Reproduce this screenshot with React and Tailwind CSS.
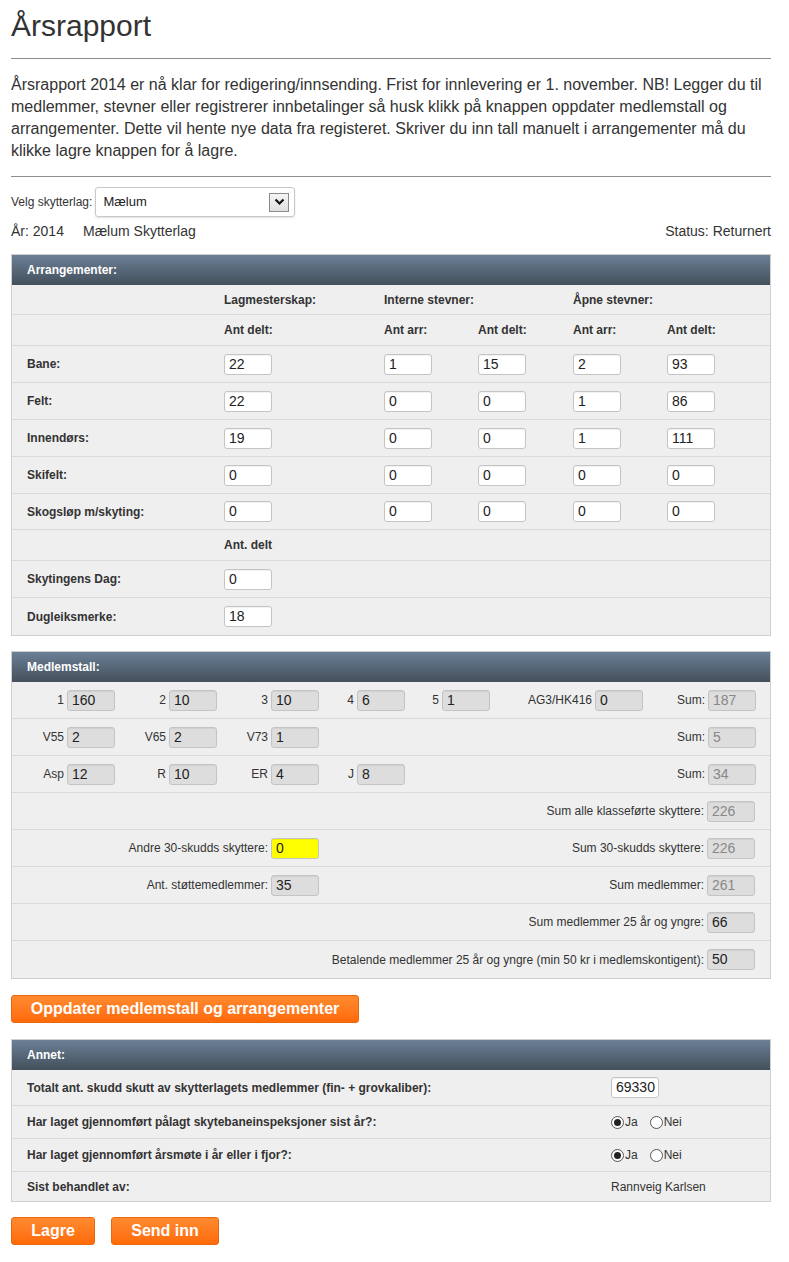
import React from "react";

const font = { fontFamily: '"Liberation Sans", Arial, sans-serif' };

function Box({ value, gray, yellow, dim, w = "w-[48px]" }) {
  const bg = yellow ? "bg-[#ffff00]" : gray ? "bg-[#dddddd]" : "bg-white";
  const color = dim ? "text-[#888]" : "text-[#222]";
  return (
    <div
      className={`${w} h-[21px] ${bg} ${color} rounded-[3px] border border-[#c4c4c4] pl-[4px] text-[14px] font-normal leading-[19px] shadow-[inset_0_1px_1px_rgba(0,0,0,0.06)]`}
    >
      {value}
    </div>
  );
}

function PanelHeader({ title }) {
  return (
    <div className="h-[30px] bg-gradient-to-b from-[#6b8096] to-[#44505c] pl-[15px] text-[12px] font-bold leading-[30px] text-white">
      {title}
    </div>
  );
}

const arrCols = "grid grid-cols-[212px_160px_94px_95px_94px_1fr] items-center";

function ArrRow({ label, values, tall = true, h, last }) {
  const height = h || (tall ? "h-[37px]" : "h-[31px]");
  return (
    <div
      className={`${arrCols} ${height} ${last ? "" : "border-b border-[#dadada]"} text-[12px] font-bold text-[#333]`}
    >
      <div className="pl-[15px]">{label}</div>
      {values.map((v, i) =>
        v === null ? (
          <div key={i} />
        ) : !tall ? (
          <div key={i}>{v}</div>
        ) : (
          <div key={i}>
            <Box value={v} />
          </div>
        )
      )}
    </div>
  );
}

const mWidths = ["w-[103px]", "w-[102px]", "w-[102px]", "w-[86px]", "w-[85px]", "w-[153px]", "w-[113px]"];

function MRow({ cells }) {
  return (
    <div className="flex h-[37px] items-center border-b border-[#dadada] text-[12px] text-[#333]">
      {cells.map((c, i) => (
        <div key={i} className={`${mWidths[i]} flex items-center justify-end gap-[3px]`}>
          {c && (
            <>
              <span>{c[0]}</span>
              <Box value={c[1]} gray dim={c[2]} />
            </>
          )}
        </div>
      ))}
    </div>
  );
}

function MRightRow({ left, label, value, last }) {
  return (
    <div className={`flex h-[37px] items-center ${last ? "" : "border-b border-[#dadada]"} text-[12px] text-[#333]`}>
      <div className="flex w-[307px] items-center justify-end gap-[3px]">
        {left && (
          <>
            <span>{left[0]}</span>
            <Box value={left[1]} gray={!left[2]} yellow={left[2]} />
          </>
        )}
      </div>
      <div className="flex flex-1 items-center justify-end gap-[3px] pr-[15px]">
        <span>{label}</span>
        <Box value={value[0]} gray dim={value[1]} />
      </div>
    </div>
  );
}

function Radio({ checked, label }) {
  return (
    <span className="flex items-center">
      <span className="flex h-[13px] w-[13px] items-center justify-center rounded-full border border-[#555] bg-white">
        {checked && <span className="h-[7px] w-[7px] rounded-full bg-[#222]" />}
      </span>
      <span className="ml-[1px]">{label}</span>
    </span>
  );
}

function AnnetRow({ label, children, h = "h-[33px]", last }) {
  return (
    <div className={`flex ${h} items-center ${last ? "" : "border-b border-[#dadada]"} text-[12px] text-[#333]`}>
      <div className="w-[599px] pl-[15px] font-bold">{label}</div>
      <div className="flex items-center gap-[12px]">{children}</div>
    </div>
  );
}

function OrangeButton({ children, w }) {
  return (
    <button
      className={`${w} h-[28px] rounded-[3px] border border-[#e8670f] bg-gradient-to-b from-[#ff8a2e] to-[#ff6a05] text-[16px] font-bold text-white`}
    >
      {children}
    </button>
  );
}

export default function App() {
  return (
    <div className="min-h-[1262px] bg-white pl-[11px] pr-[18px] text-[#333]" style={font}>
      <h1 className="pt-[9px] text-[30px] leading-[34px] text-[#333]">Årsrapport</h1>
      <div className="mt-[15px] h-px bg-[#8a8f94]" />
      <p className="mt-[15px] text-[16px] leading-[22px] text-[#333]">
        Årsrapport 2014 er nå klar for redigering/innsending. Frist for innlevering er 1. november. NB! Legger du til
        medlemmer, stevner eller registrerer innbetalinger så husk klikk på knappen oppdater medlemstall og
        arrangementer. Dette vil hente nye data fra registeret. Skriver du inn tall manuelt i arrangementer må du
        klikke lagre knappen for å lagre.
      </p>
      <div className="mt-[14px] h-px bg-[#8a8f94]" />

      <div className="mt-[10px] flex items-center gap-[3px] text-[12px]">
        <span>Velg skytterlag:</span>
        <div className="flex h-[30px] w-[200px] items-center justify-between rounded-[3px] border border-[#c8c8c8] pl-[7px] pr-[5px] text-[13px] text-[#222] shadow-[0_1px_2px_rgba(0,0,0,0.12)]">
          <span>Mælum</span>
          <span className="flex h-[19px] w-[20px] items-center justify-center border border-[#8a8a8a] bg-gradient-to-b from-[#f6f6f6] to-[#dedede]">
            <svg width="11" height="8" viewBox="0 0 11 8">
              <path d="M1.5 1.5 L5.5 5.5 L9.5 1.5" fill="none" stroke="#111" strokeWidth="2.2" />
            </svg>
          </span>
        </div>
      </div>

      <div className="mt-[5px] flex h-[18px] items-center text-[14px]">
        <span className="w-[72px]">År: 2014</span>
        <span>Mælum Skytterlag</span>
        <span className="ml-auto">Status: Returnert</span>
      </div>

      {/* Arrangementer */}
      <div className="mt-[14px] border border-[#cfcfcf] bg-[#efefef]">
        <PanelHeader title="Arrangementer:" />
        <ArrRow tall={false} h="h-[30px]" label="" values={["Lagmesterskap:", "Interne stevner:", "", "Åpne stevner:", ""]} />
        <ArrRow tall={false} label="" values={["Ant delt:", "Ant arr:", "Ant delt:", "Ant arr:", "Ant delt:"]} />
        <ArrRow label="Bane:" values={["22", "1", "15", "2", "93"]} />
        <ArrRow label="Felt:" values={["22", "0", "0", "1", "86"]} />
        <ArrRow label="Innendørs:" values={["19", "0", "0", "1", "111"]} />
        <ArrRow label="Skifelt:" values={["0", "0", "0", "0", "0"]} />
        <ArrRow label="Skogsløp m/skyting:" h="h-[36px]" values={["0", "0", "0", "0", "0"]} />
        <ArrRow tall={false} label="" values={["Ant. delt", "", "", "", ""]} />
        <ArrRow label="Skytingens Dag:" values={["0", null, null, null, null]} />
        <ArrRow label="Dugleiksmerke:" values={["18", null, null, null, null]} last />
      </div>

      {/* Medlemstall */}
      <div className="mt-[15px] border border-[#cfcfcf] bg-[#efefef]">
        <PanelHeader title="Medlemstall:" />
        <MRow
          cells={[
            ["1", "160"],
            ["2", "10"],
            ["3", "10"],
            ["4", "6"],
            ["5", "1"],
            ["AG3/HK416", "0"],
            ["Sum:", "187", true],
          ]}
        />
        <MRow cells={[["V55", "2"], ["V65", "2"], ["V73", "1"], null, null, null, ["Sum:", "5", true]]} />
        <MRow
          cells={[["Asp", "12"], ["R", "10"], ["ER", "4"], ["J", "8"], null, null, ["Sum:", "34", true]]}
        />
        <MRightRow label="Sum alle klasseførte skyttere:" value={["226", true]} />
        <MRightRow left={["Andre 30-skudds skyttere:", "0", true]} label="Sum 30-skudds skyttere:" value={["226", true]} />
        <MRightRow left={["Ant. støttemedlemmer:", "35"]} label="Sum medlemmer:" value={["261", true]} />
        <MRightRow label="Sum medlemmer 25 år og yngre:" value={["66"]} />
        <MRightRow
          label="Betalende medlemmer 25 år og yngre (min 50 kr i medlemskontigent):"
          value={["50"]}
          last
        />
      </div>

      <div className="mt-[16px]">
        <OrangeButton w="w-[348px]">Oppdater medlemstall og arrangementer</OrangeButton>
      </div>

      {/* Annet */}
      <div className="mt-[16px] border border-[#cfcfcf] bg-[#efefef]">
        <PanelHeader title="Annet:" />
        <AnnetRow label="Totalt ant. skudd skutt av skytterlagets medlemmer (fin- + grovkaliber):" h="h-[36px]">
          <Box value="69330" />
        </AnnetRow>
        <AnnetRow label="Har laget gjennomført pålagt skytebaneinspeksjoner sist år?:">
          <Radio checked label="Ja" />
          <Radio label="Nei" />
        </AnnetRow>
        <AnnetRow label="Har laget gjennomført årsmøte i år eller i fjor?:">
          <Radio checked label="Ja" />
          <Radio label="Nei" />
        </AnnetRow>
        <AnnetRow label="Sist behandlet av:" h="h-[29px]" last>
          <span>Rannveig Karlsen</span>
        </AnnetRow>
      </div>

      <div className="mt-[15px] flex gap-[16px]">
        <OrangeButton w="w-[84px]">Lagre</OrangeButton>
        <OrangeButton w="w-[108px]">Send inn</OrangeButton>
      </div>
    </div>
  );
}
